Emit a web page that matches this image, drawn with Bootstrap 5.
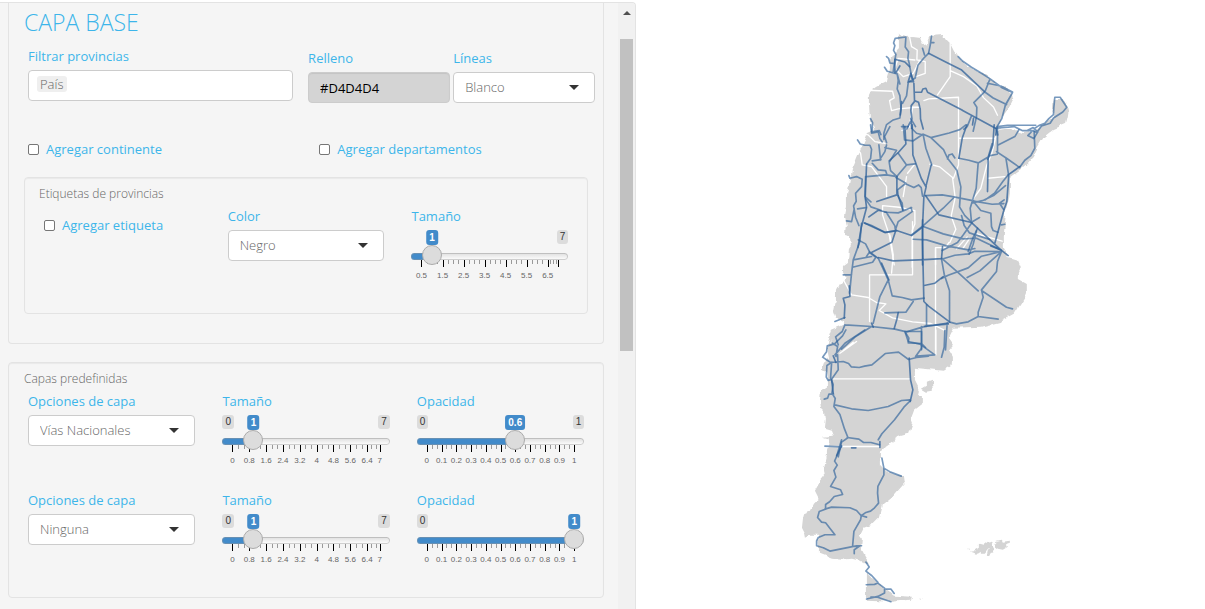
<!DOCTYPE html>
<html lang="es">
<head>
<meta charset="utf-8">
<meta name="viewport" content="width=device-width, initial-scale=1">
<title>Capa base</title>
<link rel="stylesheet" href="https://cdn.jsdelivr.net/npm/bootstrap@5.3.0/dist/css/bootstrap.min.css">
<style>
  :root { --accent: #3db5ea; --edge: #e3e3e3; --soft: #666; --fill: #428bca; }
  body { font-family: "Open Sans", "Noto Sans", sans-serif; font-size: 13px; line-height: 20px; color: var(--soft); background: #fff; }
  .app { height: 100vh; }
  .panel { flex: 0 0 52.8%; min-width: 0; margin-top: 2px; background: #f5f5f5; border: 1px solid var(--edge); border-left: 0; border-bottom: 0; border-radius: 0 4px 0 0; }
  .panel-body { min-width: 0; padding: 0 14px 0 8px; }
  .well { border: 1px solid var(--edge); border-radius: 4px; padding: 6px 15px 0; box-shadow: inset 0 1px 1px rgba(0,0,0,.05); font-weight: 300; }
  .well-base { border-top: 0; border-radius: 0 0 4px 4px; height: 341px; padding-top: 8px; margin-bottom: 18px; box-shadow: none; }
  .well-layers { height: 236px; }
  .well-tags { height: 137px; padding: 6px 14px 0; margin-top: 18px; }
  .legend-text { font-size: 12px; }
  .title { color: var(--accent); font-size: 23px; line-height: 22px; font-weight: 300; margin: 0 0 14px; }
  .lab { display: block; color: var(--accent); font-weight: 400; line-height: 20px; margin-bottom: 4px; }
  .base-row { margin: 0 -7px 0 4px; gap: 3px; align-items: flex-end; height: 56px; }
  .f-wide { flex: 265 1 0; margin-right: 12px; padding-bottom: 2px; }
  .f-half { flex: 142 1 0; }
  .ctl { height: 31px; border: 1px solid #ccc; border-radius: 4px; font-size: 13px; line-height: 20px; padding: 3px 11px 5px; color: var(--soft); font-weight: 300; background-color: #fff; }
  .ctl.form-select { --bs-form-select-bg-img: url("data:image/svg+xml,%3csvg xmlns='http://www.w3.org/2000/svg' viewBox='0 0 10 5'%3e%3cpath fill='%23333' d='M0 0h10L5 5z'/%3e%3c/svg%3e"); background-image: var(--bs-form-select-bg-img); background-size: 10px 5px; background-position: right 15px center; }
  .ctl.hex { background: #d4d4d4; color: #000; font-weight: 400; box-shadow: inset 0 1px 1px rgba(0,0,0,.075); padding: 4px 11px; }
  .picker { padding: 5px 8px; height: 31px; }
  .chip { background: #efefef; color: var(--soft); border: 0; border-radius: 3px; padding: 0 3px; line-height: 16px; font-weight: 300; display: block; }
  .chk { gap: 7px; color: var(--accent); font-weight: 400; }
  .chk input { appearance: none; width: 11px; height: 11px; border: 1px solid #767676; border-radius: 2px; background: #fff; margin: 1px 0 0; }
  .chk input:checked { background: var(--fill); }
  .chk-row { margin: 36px 0 0 4px; }
  .chk-row > :first-child { flex: 0 0 52%; }
  .cols { display: grid; grid-template-columns: repeat(3, 1fr); gap: 27px; margin: 2px 4px 0; }
  .cols-tags { margin: 2px 5px 0; }
  .cols-tags .chk { height: 20px; margin-top: 9px; }
  .slider { position: relative; height: 51px; margin-top: 4px; font-family: "Liberation Sans", Arial, sans-serif; font-weight: 400; }
  .cap { position: absolute; top: 0; font-size: 10px; line-height: 14px; padding: 0 3px; border-radius: 3px; background: #dcdcdc; color: #333; }
  .cap-now { background: var(--fill); color: #fff; font-weight: 700; line-height: 15px; transform: translateX(-50%); }
  .slider input { appearance: none; -webkit-appearance: none; position: absolute; top: 16px; left: 0; width: 100%; height: 20px; margin: 0; background: none; }
  .slider input::-webkit-slider-runnable-track { height: 7px; border-radius: 7px; background: linear-gradient(90deg, var(--fill) var(--pos), transparent var(--pos)), linear-gradient(#dedede, #fff); box-shadow: inset 0 0 0 1px rgba(150,150,150,.45); }
  .slider input::-webkit-slider-thumb { -webkit-appearance: none; width: 20px; height: 20px; margin-top: -8px; border-radius: 50%; border: 1px solid #ababab; background: #dcdcdc; }
  .ticks { position: absolute; left: 10px; right: 10px; top: 30px; height: 20px; }
  .ticks i { position: absolute; width: 1px; height: 4px; background: #999; }
  .ticks i.major { height: 7px; background: #000; }
  .ticks span { position: absolute; top: 11px; font-size: 8px; line-height: 10px; color: #666; transform: translateX(-50%); }
  .second { margin-top: 24px; }
  .bar { flex: 0 0 17px; background: #f1f1f1; padding: 8px 2px 0; }
  .bar svg { display: block; margin: 0 auto 24px; }
  .bar div { height: 312px; background: #c1c1c1; }
  .map svg { display: block; width: 100%; height: auto; }
</style>
</head>
<body>
<div class="app d-flex overflow-hidden">
  <section class="panel d-flex overflow-hidden">
    <div class="panel-body flex-grow-1">
      <div class="well well-base">
        <h1 class="title">CAPA BASE</h1>
        <div class="base-row d-flex">
          <div class="f-wide">
            <span class="lab" id="prov">Filtrar provincias</span>
            <div class="ctl picker d-flex align-items-start" role="group" aria-labelledby="prov"><button type="button" class="chip">País</button></div>
          </div>
          <div class="f-half">
            <label class="lab" for="hex">Relleno</label>
            <input id="hex" class="form-control ctl hex" type="text" value="#D4D4D4">
          </div>
          <div class="f-half">
            <label class="lab" for="lin">Líneas</label>
            <select id="lin" class="form-select ctl"><option>Blanco</option></select>
          </div>
        </div>
        <div class="chk-row d-flex">
          <label class="chk d-flex align-items-center"><input type="checkbox">Agregar continente</label>
          <label class="chk d-flex align-items-center"><input type="checkbox">Agregar departamentos</label>
        </div>
        <div class="well well-tags">
          <div class="legend-text">Etiquetas de provincias</div>
          <div class="cols cols-tags">
            <label class="chk d-flex align-items-center"><input type="checkbox">Agregar etiqueta</label>
            <div>
              <label class="lab" for="col">Color</label>
              <select id="col" class="form-select ctl"><option>Negro</option></select>
            </div>
            <div>
              <label class="lab" for="s0">Tamaño</label>
              <div class="slider" data-id="s0" data-min="0.5" data-max="7" data-step="1" data-minor="3" data-value="1"></div>
            </div>
          </div>
        </div>
      </div>
      <div class="well well-layers">
        <div class="legend-text">Capas predefinidas</div>
        <div class="cols">
          <div>
            <label class="lab" for="c1">Opciones de capa</label>
            <select id="c1" class="form-select ctl"><option>Vías Nacionales</option></select>
          </div>
          <div>
            <label class="lab" for="s1">Tamaño</label>
            <div class="slider" data-id="s1" data-min="0" data-max="7" data-step="0.8" data-minor="2" data-value="1"></div>
          </div>
          <div>
            <label class="lab" for="s2">Opacidad</label>
            <div class="slider" data-id="s2" data-min="0" data-max="1" data-step="0.1" data-minor="2" data-value="0.6"></div>
          </div>
        </div>
        <div class="cols second">
          <div>
            <label class="lab" for="c2">Opciones de capa</label>
            <select id="c2" class="form-select ctl"><option>Ninguna</option></select>
          </div>
          <div>
            <label class="lab" for="s3">Tamaño</label>
            <div class="slider" data-id="s3" data-min="0" data-max="7" data-step="0.8" data-minor="2" data-value="1"></div>
          </div>
          <div>
            <label class="lab" for="s4">Opacidad</label>
            <div class="slider" data-id="s4" data-min="0" data-max="1" data-step="0.1" data-minor="2" data-value="1"></div>
          </div>
        </div>
      </div>
    </div>
    <div class="bar" aria-hidden="true">
      <svg width="8" height="4" viewBox="0 0 8 4"><path d="M0 4L4 0l4 4z" fill="#505050"/></svg>
      <div></div>
    </div>
  </section>
  <main class="map flex-grow-1">
    <svg viewBox="636 0 569 609" role="img" aria-label="Mapa de Argentina con vías nacionales" fill="none" stroke-linejoin="round" stroke-linecap="round">
      <filter id="coast" filterUnits="userSpaceOnUse" x="780" y="20" width="310" height="589" color-interpolation-filters="sRGB">
        <feTurbulence type="fractalNoise" baseFrequency=".1" numOctaves="2" seed="4"/>
        <feDisplacementMap in="SourceGraphic" scale="6" xChannelSelector="R" yChannelSelector="G"/>
      </filter>
      <!-- territory -->
      <g fill="#d4d4d4" filter="url(#coast)">
        <path d="M898 32l2 3 3 1 5 1 4-1 8 1 1 3 2 5 4-1 1-4 2-4 13-1 3 5 5 5 3 6 5 7 7 6 8 6 8 5 9 5 11 7 11 6 1 4-3 6-3 6-4 6-3 7-4 8 7-1 7 0 6 2 6 2 11-1 9-7 10-8 1-8 1-10 8 0 2 4 4 6-1 7-2 8-12 5-10 8-6 10-5 10-6 7-6 5-11 8v15l-1 7-4 16-2 20v14l5 8 10 3 3 7-3 7v5l9 5v10l-6 10-7 11-13 7-20 5-27 1-5 10 5 7-5 6 4 7 0 7-9 6-20-2-10-1v13l5 10-1 4 5 1 0 7-9 7-3 8 2 5-4 12-11 3-12 8-5 7v12l8 8 8 2 7 1 1 7-13 15-10 8-3 12-7 7-8 3-4 8 3 4-1 11 3 6 5 7-10-3-8-2-10 1-10-1-13-5v-8l-1-10-9 0-4 2-1-5-3-6 1-9 1-4 7-3 3-6 6-6-2-4-2-4 5-9 5-6-1-8 3-12 0-4 2-13-7-2 12-1-2-5-7-2 1-9-1-9-4-2-1-8 1-10 7-4 0-8-1-7-5-3 2-6 5-4-1-5 0-8 4-7-5 7 3-10 2-6 12-5 0-4-7-2-3-8 2-10 0-10 3-6 7-7-2-5 0-8 4-3 1-13 2-3-1-10-4-1 1-9-2-10 2-10 0-10 3-16 2-10 3-7 4-10 3-8 5-12 7-3-4-10-1-18 0-6 3-6 5-4 10-5 1-5 2-7 0-9 3-5 5-7z"/>
        <path d="M927 382l5-2 1 11-6 1-5-3 5-3z"/>
        <path d="M866 572l8 7 5 6 7 4 9 7 16 1-1 3-16 2-28-1z"/>
        <path d="M974 551l5-3 0-4 4 1 4-3 5-1-2 4 3 2-5 2-3 4-5 0 0-2-3 2zM995 543l2-2 5-1 1 2 7-1 0 3-3 1 1 2-5 3-5-1-4-3zM988 550l4-3 2 1-1 3 2 1-3 0-2 4-3-1zM968 549l2 0v1zM971 552l6-1-1 3-2-1zM919 599h2v1zM923 599h1v1z"/>
      </g>
      <!-- province borders -->
      <g stroke="#fff" stroke-width="4">
        <g transform="translate(840 20) scale(.3333)">
          <path d="M80 211l78 3 5 20-14 8 6 30 20-5 55-5M209 50l6 30 17 10-1 30 25 5v35l-28 10M165 145l10-30 50 5M170 150l20 20 30-10 20-40M331 70v100l-38 55M331 152l40 18 40 28 20 35 30 28 12 25M252 242l15-5 89-5 0 90M240 262l-22 0-10 60-22 10"/>
        </g>
        <g transform="translate(835 125) scale(.3333)">
          <path d="M70 25l30 5 20 20 30 5M57 60l20 25 5 35 28 5 30 40 15 20 0 30M143 270v-28l50 5 47 10v40l-8 20v110M143 270l20 60 10 60 5 30M215 155l-10 60M218 145l20-25M285 118l30 8 38 32 8 60-12 55 14 40-18 40M371 0v120l-15 40M371 40h110M483 35l-12 50-15 35-18 70-25 35M460 160l50-5M420 325l40 12 42 12M365 372l32-36M302 420v-52h30l10-15"/>
        </g>
        <g transform="translate(820 180) scale(.3333)">
          <path d="M278 125v160H149v140M210 165l10 60-5 55M65 290l30 55 50 8 25 15 28 4-20 20 40 22 60 12 55 5 40 20M347 510V205M430 205l20-30"/>
        </g>
        <g transform="translate(790 330) scale(.3333)">
          <path d="M130 147h230M108 350h160M438 0v75M150 70l50-35M160 62l30-25"/>
        </g>
      </g>
      <!-- national roads -->
      <g stroke="#2b5f99" stroke-opacity=".64" stroke-width="5">
        <g transform="translate(840 20) scale(.3333)">
          <path d="M275 48l-4 28-5 24-14 14-18 22-8 38-22 14M282 68h-10M166 55l32-4-2 30 10 14-2 20 4 15 8 45M166 55l-5 14 4 8-4 14 7 12-3 17-5 35M140 110l6 5 4 14 10 1M134 142l8 12 30 8 8 30M248 85l6 20M172 162l3 20-3 25 8 20 2 22M182 249l2 18-4 27-20 6-20 14-8 25 0 20M205 188l-5 40-12 22M355 110l14 14 26 18 30 18 25 16 38 28 30 14-22 38M450 178l-15 38 25 18 40 20M443 190l40 8 35 18M518 218l-22 40-10 38-18 30M434 216l-32 32 9 14-1 28-10 44M394 290l-12 30-10 8M468 325l55-5 24 12 35 0M585 325l12-8 18-7 12-14 14-12 1-20 3-32 16 0 20 30-12 14-28 18-10 16-26 8-14 20-13-6-14 15 18 9 12-20-14-13-18 9M470 330l4 15M215 300l12 20M92 296l6 12-2 28 22-4 5 12M205 320h-20"/>
        </g>
        <g transform="translate(835 125) scale(.3333)">
          <path d="M107 0l3 25 20-4 5 20 7 10M165 5l-16 30 6 18M68 45l8 12 14 4 15 0 5 12-3 28-12 16M132 60l5 45M155 60l-5 20-14 22M150 68l35 8-10 16-12 20 4 25 19 18M42 152l3 8 20-5 17 8-2 22-18 20 2 24-8 14 6 34 10 25M112 115l18 20 22 2 4 12-60 6M112 108l26-4M92 155l-2 60M95 155l60-5 32 5M190 85l25 35-32 38 30 17-25 20 2 20 12 20 2 20M215 120l26-3M215 178l22 10 14-8 8 8 4 26M205 0l4 45 25 3 30-20M230 10l15 15 20 5 8 40 18 50M265 28l23 10 55-14 32-10 18-14M288 38l38 36 12 26 28 36 12 50-4 60 16 26 22 22M338 102l4-12 10-3 8 12M372 100l30 6 28 8 30-18 12-40M430 114l-6 76-18 60 4 42M488 85l0-80 30-4 85 0M490 60l50-25 12-20M485 80l30 20 40 28M513 98l8 50M598 20l2 50-12 22-18 14-16 22M520 150l-16 20-25 35-28 20M487 88l-25 5-4 10M512 182l-36 30-30 14-32 8M412 228l60 10 35-2M508 225l-14 10 12 18M420 235l18 22 30 8 2 40 5 12 14 5M272 212l50-2 35 6 60 12M355 220l-30 30-60 52-35 28M380 272l8 30 16 22 60 20M410 295l-24 34-18 24-46 24M410 292l24-14M425 318l-10 40-12 30M265 305l60 22 60 15 40-2 50 24 25 12M235 343l40 2 60 18 65 12 20-4M90 215l18 16M92 222l16 24 30 10M150 262l40 2 40-16M156 265l24 38 2 16M228 248l4 12-42 30-8 24M88 294l22 8 40 20 35-5M68 252l25-4M35 288l15 2 8-38M500 300l10-2M70 345l22 12 12 24 24 18"/>
        </g>
        <g transform="translate(820 180) scale(.3333)">
          <path d="M125 130l-5 55-20 55-5 40-6 60M148 217l20 15-10 15-60 15M100 240l55-10M149 216l-10 15M175 235l30 65-25 50-20 80M205 300l12 48 30 5 28 7 38-5M280 365l-22 32-63 2M365 238l8 45 16 50 0 90M365 235l50 43 60 55M365 238l40-12 40-4 20-8 80 1M445 215l14-40 14-30M545 215l-60 14-40 35-60 22-20 10M545 215l-65 58-38 20M545 215l-12 30-3 30-45 55 5 22-15 45 0 13 60 8M485 332l45 30 30 20 18 5M475 410l-30 16-35 6-20-5M70 285l25 0M45 425l30-12M75 435l-8 20-20 16 8 24M75 435l80 5 70 8 35 8 60-18 65-5M155 440l-50 32-40 36M255 455l12 20-2 14 40 2 12 12M305 440v70M382 430l-5 80M320 375v65"/>
        </g>
        <g transform="translate(790 330) scale(.3333)">
          <path d="M168 0l-10 18-24 24-22 6-2 18-12 16 24 16 38-3 16 6 8 10 24 2 16-4 22-4 40-34 40-4 30 22 24-6 36-4M225 0l-60 40-30 35M128 40l15 10-5 30M143 75l2 45-20 28-10 4-6-10 2-35 15-10M125 100l-3 44 8 20-4 26 10 16-4 24 18 24 14 44 10 25M103 208l10-3 4-12 14 0M135 225l50 12 50 5 60-12 40-18 25-2M362 212l-20 20-28 38-38 42-11 18M172 323l35 5 14 10 22 0 26 7M175 323l-20 14-10 44M105 349l50 2M345 5l10 30 35 8 20 14 25 18-55 4M455 82l8-30 2-50M345 5h50l0 50-18 25"/>
        </g>
        <g transform="translate(790 440) scale(.3333)">
          <path d="M155 0l-15 50-6 14 8 12-10 16 6 20-16 28 30 10 6 14-25 6-14 16-12 8 0 12M105 208l20-6 55 2 20 8 14 16M110 207l-22 8-5 18 12 14 12 2 28 36-30 0-20 8-5 10v15l20 6 20 10 60-12 20-4 15 0M276 55l6 30 0 20-18 35-1 20 3 30-12 14-12 10-14 4-14 10-2 12-20 35-4 45 20 0-15 10 0 12M282 85l20 12 32 12M216 228l14 4M228 367l10 15-10 12 18 14 18 20M229 435l25-1 10-4 20 15 0 15-20 10-34 8M285 448l18 0 10 13M243 472l18 0 42 14"/>
        </g>
      </g>
      <!-- main routes -->
      <g stroke="#2b5f99" stroke-opacity=".74" stroke-width="5">
        <g transform="translate(840 20) scale(.3333)">
          <path d="M266 100l50 25 48 24 70 66M225 217l20 0 4-10 9-2 5 12 105 54M367 271l100 54M165 158v-40l30 8 14 14M168 158l12-20M213 160l8 25-16 0zM222 190l2 52 12 5 5 20 1 30 8 30M226 242l-12 15-1 15 3 25-15 30M185 245l-4 40M213 295l3 30M401 295l-3 20M470 325l-2 20"/>
        </g>
        <g transform="translate(835 125) scale(.3333)">
          <path d="M232 0l2 90 25 70 14 25 16-65M274 185l-7 30-4 90 0 115M272 212l40 58 98 23 88 82 22 17M522 148l-6 82-10 30-26 95M520 150l35-25M396 0l-14 40-10 60M478 0l-4 60-14 40-2 100M186 155l0 55-60 20M95 118l-4 100 4 30-16 60-10 60M163 108l28-26 22-25-3-52M102 276l28-20 25 6M90 295l60 28 35-6 45 15 35-27M183 316l-12 36-60 30M190 212l14 44M498 375l-30-12"/>
        </g>
        <g transform="translate(820 180) scale(.3333)">
          <path d="M308 120l0 70 4 175 14 14 64 48M368 200l-3 36-50 3-95 4-45-10M185 250l22 50M370 290l-25 20-32 7M155 430l5 12M235 398l-4 20-8 28M88 318l2 32-20 5 5 20-2 40M315 440l70-10"/>
        </g>
        <g transform="translate(790 330) scale(.3333)">
          <path d="M358 85l4 65 7 30-8 35M125 150l5 40M130 78l8 20M270 335v18M185 354h13M155 348l-15 30"/>
        </g>
      </g>
    </svg>
  </main>
</div>
<script>
  // Builds caps, range input and scale for every slider from its data attributes.
  document.querySelectorAll('.slider').forEach(function (box) {
    var d = box.dataset, min = +d.min, max = +d.max, step = +d.step, minor = +d.minor, val = +d.value;
    var share = function (v) { return (v - min) / (max - min); };
    var place = function (v) { return 'calc(10px + (100% - 20px) * ' + share(v).toFixed(3) + ')'; };
    var html = '';
    if (share(val) > 0.12) html += '<span class="cap" style="left:0">' + min + '</span>';
    if (share(val) < 0.9) html += '<span class="cap" style="right:0">' + max + '</span>';
    html += '<div class="ticks">';
    var n = Math.ceil((max - min) / step - 0.001);
    for (var k = 0; k <= n; k++) {
      var v = Math.min(min + k * step, max), next = Math.min(v + step, max);
      html += '<i class="major" style="left:' + share(v) * 100 + '%"></i>';
      if (k < n || min === 0) html += '<span style="left:' + share(v) * 100 + '%">' + +v.toFixed(1) + '</span>';
      for (var m = 1; m <= minor && k < n; m++) html += '<i style="left:' + share(v + (next - v) * m / (minor + 1)) * 100 + '%"></i>';
    }
    html += '</div><input type="range" id="' + d.id + '" min="' + min + '" max="' + max + '" step="0.1" value="' + val + '" style="--pos:' + place(val) + '">';
    html += '<span class="cap cap-now" style="left:' + place(val) + '">' + val + '</span>';
    box.innerHTML = html;
  });
</script>
<script src="https://cdn.jsdelivr.net/npm/bootstrap@5.3.0/dist/js/bootstrap.bundle.min.js"></script>
</body>
</html>
